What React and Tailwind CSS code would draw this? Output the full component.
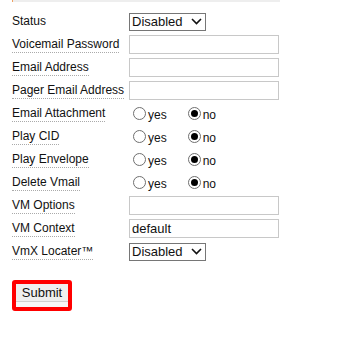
import React from 'react';

const rows = [
  { label: 'Status', type: 'select', plain: true },
  { label: 'Voicemail Password', type: 'text' },
  { label: 'Email Address', type: 'text' },
  { label: 'Pager Email Address', type: 'text' },
  { label: 'Email Attachment', type: 'radio' },
  { label: 'Play CID', type: 'radio' },
  { label: 'Play Envelope', type: 'radio' },
  { label: 'Delete Vmail', type: 'radio' },
  { label: 'VM Options', type: 'text' },
  { label: 'VM Context', type: 'text', value: 'default' },
  { label: 'VmX Locater™', type: 'select' },
];

const Radio = ({ checked, label }) => (
  <span className="inline-flex items-center">
    <span className="w-[13px] h-[13px] rounded-full border border-[#6f6f6f] bg-white flex items-center justify-center">
      {checked && <span className="w-[7px] h-[7px] rounded-full bg-black" />}
    </span>
    <span className="ml-[2px] text-[12px] leading-none mt-[2px]">{label}</span>
  </span>
);

const Select = () => (
  <div className="w-[77px] h-[18px] border border-[#767676] bg-white flex items-center pl-[2px] pr-[3px] justify-between">
    <span className="text-[13px] leading-none">Disabled</span>
    <svg width="11" height="7" viewBox="0 0 11 7" fill="none">
      <path d="M1 1l4.5 4.5L10 1" stroke="#111" strokeWidth="1.6" />
    </svg>
  </div>
);

const Field = ({ row }) => {
  if (row.type === 'select') return <Select />;
  if (row.type === 'radio')
    return (
      <div className="flex items-center pl-[4px] gap-[21px]">
        <Radio label="yes" />
        <Radio checked label="no" />
      </div>
    );
  return (
    <div className="w-[150px] h-[19px] border border-[#c8c8c8] bg-white flex items-center pl-[2px] text-[13px] leading-none">
      {row.value}
    </div>
  );
};

export default function App() {
  return (
    <div className="w-[340px] h-[337px] bg-white text-[#111] font-['Liberation_Sans',Arial,sans-serif] relative">
      <div className="ml-[12px] w-[268px] h-[2px] bg-[#eeeeee] border-l border-[#f0a060]" />
      <div className="pt-[8px] flex flex-col">
        {rows.map((r) => (
          <div key={r.label} className="h-[23px] flex items-center">
            <div className="w-[129px] pl-[12px] -mt-[3px]">
              <span
                className={`inline-block text-[12px] leading-[14px] pb-[1px] ${
                  r.plain ? 'border-b border-transparent' : 'border-b border-dotted border-[#aaaaaa]'
                }`}
              >
                {r.label}
              </span>
            </div>
            <Field row={r} />
          </div>
        ))}
      </div>
      <div className="mt-[17px] ml-[12px] w-[60px] h-[31px] border-[4px] border-[#ff0000] rounded-[3px] bg-[#f7f7f7]">
        <button className="w-full h-[18px] bg-[#efefef] border-b border-[#d0d0d0] text-[13px] leading-none flex items-center justify-center">
          Submit
        </button>
      </div>
    </div>
  );
}
